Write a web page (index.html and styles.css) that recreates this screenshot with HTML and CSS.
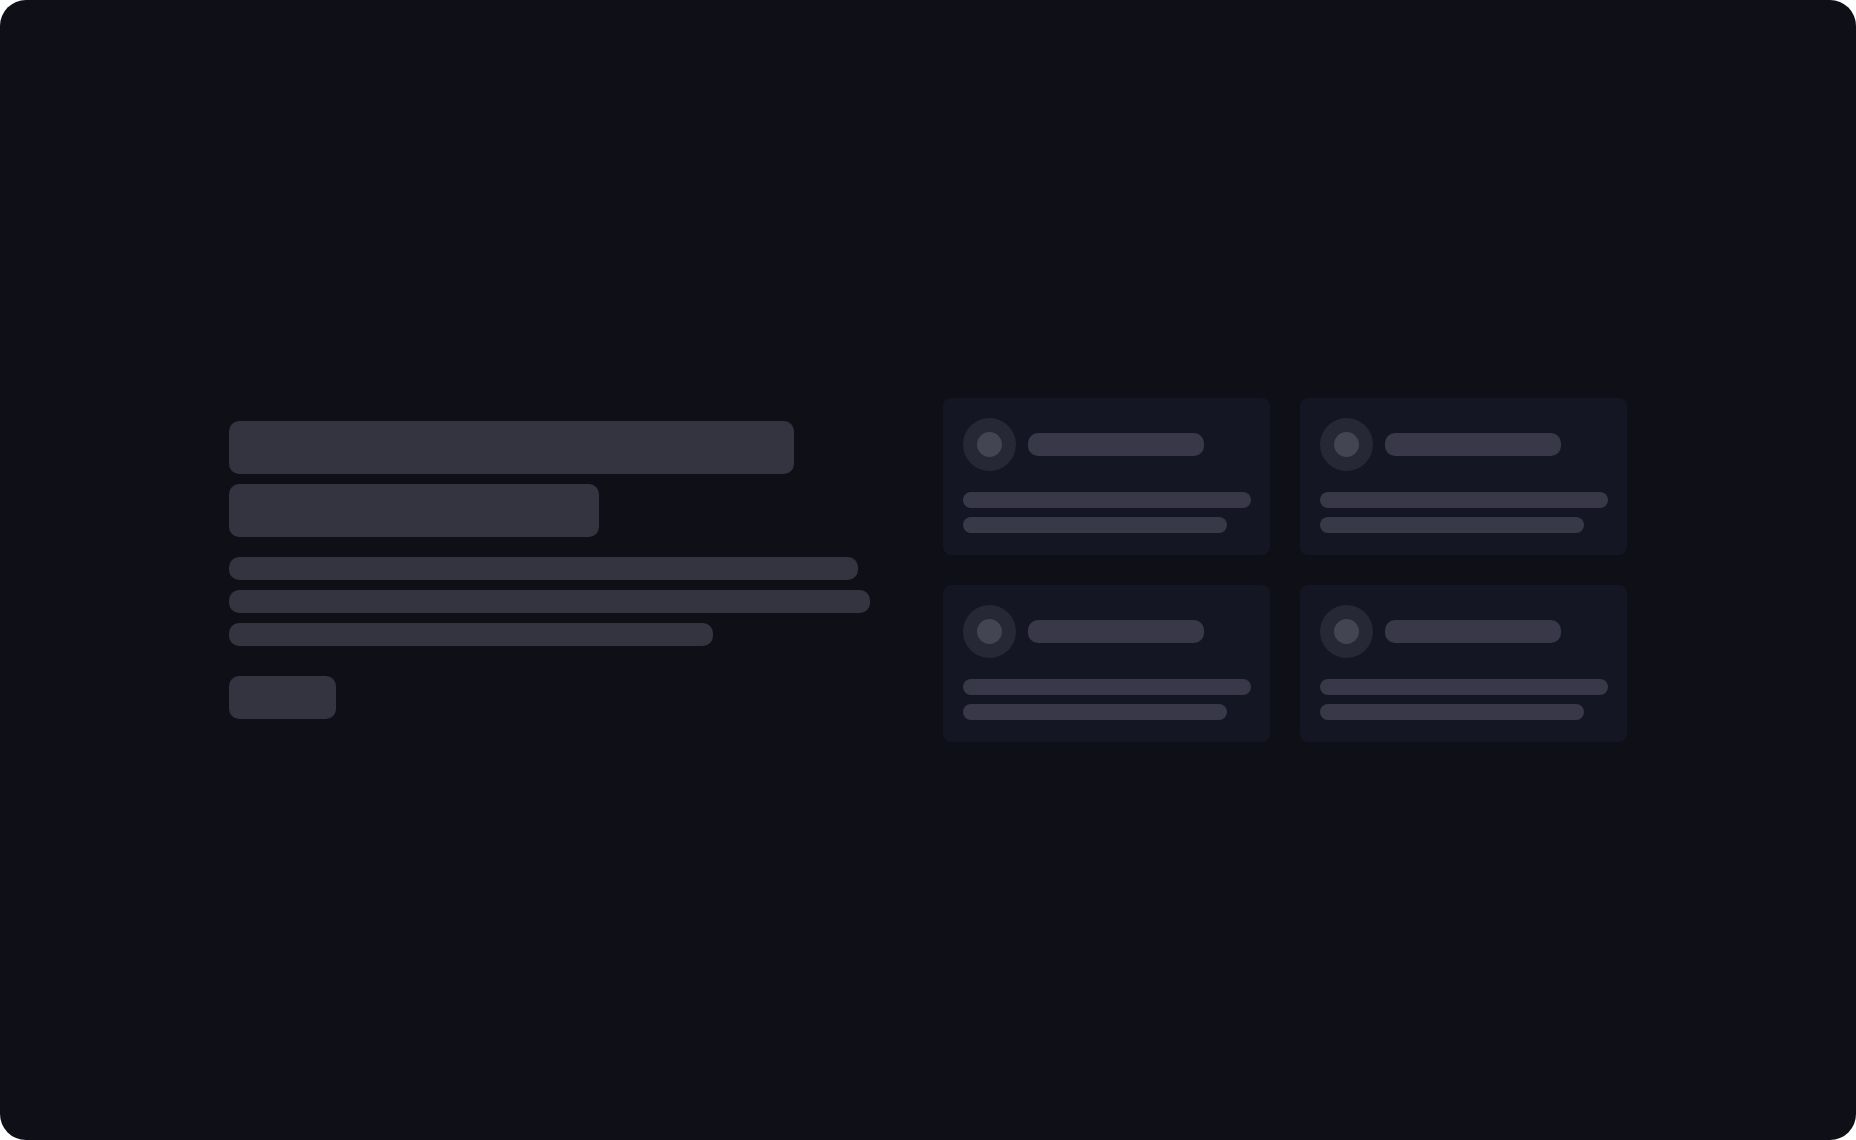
FILE: index.html
```html
<!DOCTYPE html>
<html lang="en">
<head>
<meta charset="utf-8">
<meta name="viewport" content="width=device-width, initial-scale=1">
<title>Loading</title>
<link rel="stylesheet" href="styles.css">
</head>
<body>
<main class="page" aria-busy="true">
  <div class="hero">
    <section class="intro">
      <div class="heading">
        <div class="bone title title-long"></div>
        <div class="bone title title-short"></div>
      </div>
      <div class="copy">
        <div class="bone line line-first"></div>
        <div class="bone line line-second"></div>
        <div class="bone line line-third"></div>
      </div>
      <div class="bone action"></div>
    </section>
    <section class="cards">
      <article class="card">
        <div class="card-head"><div class="avatar"><div class="avatar-dot"></div></div><div class="card-title"></div></div>
        <div class="card-copy"><div class="card-line"></div><div class="card-line card-line-short"></div></div>
      </article>
      <article class="card">
        <div class="card-head"><div class="avatar"><div class="avatar-dot"></div></div><div class="card-title"></div></div>
        <div class="card-copy"><div class="card-line"></div><div class="card-line card-line-short"></div></div>
      </article>
      <article class="card">
        <div class="card-head"><div class="avatar"><div class="avatar-dot"></div></div><div class="card-title"></div></div>
        <div class="card-copy"><div class="card-line"></div><div class="card-line card-line-short"></div></div>
      </article>
      <article class="card">
        <div class="card-head"><div class="avatar"><div class="avatar-dot"></div></div><div class="card-title"></div></div>
        <div class="card-copy"><div class="card-line"></div><div class="card-line card-line-short"></div></div>
      </article>
    </section>
  </div>
</main>
</body>
</html>
```
FILE: styles.css
```css
* {
  box-sizing: border-box;
}

body {
  margin: 0;
  background: #fff;
  font-family: Inter, sans-serif;
}

.page {
  display: flex;
  align-items: center;
  justify-content: center;
  min-height: 100vh;
  border-radius: 26px;
  background: #0f0f17;
}

.hero {
  display: grid;
  grid-template-columns: 1fr 1fr;
  align-items: center;
  gap: 30px;
  width: 100%;
  max-width: 1398px;
}

.bone {
  max-width: 100%;
  border-radius: 10px;
  background: #343440;
}

.heading,
.copy {
  display: flex;
  flex-direction: column;
  gap: 10px;
}

.heading {
  margin-bottom: 20px;
}

.copy {
  margin-bottom: 30px;
}

.title {
  height: 53px;
}

.title-long {
  width: 565px;
}

.title-short {
  width: 370px;
}

.line {
  height: 23px;
}

.line-first {
  width: 629px;
}

.line-second {
  width: 641px;
}

.line-third {
  width: 484px;
}

.action {
  width: 107px;
  height: 43px;
}

.cards {
  display: grid;
  grid-template-columns: 1fr 1fr;
  gap: 30px;
}

.card {
  padding: 20px 19px 22px 20px;
  border-radius: 8px;
  background: #141623;
}

.card-head {
  display: flex;
  align-items: center;
  gap: 12px;
  margin-bottom: 21px;
}

.avatar {
  display: flex;
  flex: none;
  align-items: center;
  justify-content: center;
  width: 53px;
  height: 53px;
  border-radius: 50%;
  background: #262836;
}

.avatar-dot {
  width: 25px;
  height: 25px;
  border-radius: 50%;
  background: #444553;
}

.card-title {
  width: 176px;
  height: 23px;
  border-radius: 10px;
  background: #393848;
}

.card-copy {
  display: flex;
  flex-direction: column;
  gap: 9px;
}

.card-line {
  height: 16px;
  border-radius: 8px;
  background: #393848;
}

.card-line-short {
  width: 264px;
  max-width: 100%;
}
```
